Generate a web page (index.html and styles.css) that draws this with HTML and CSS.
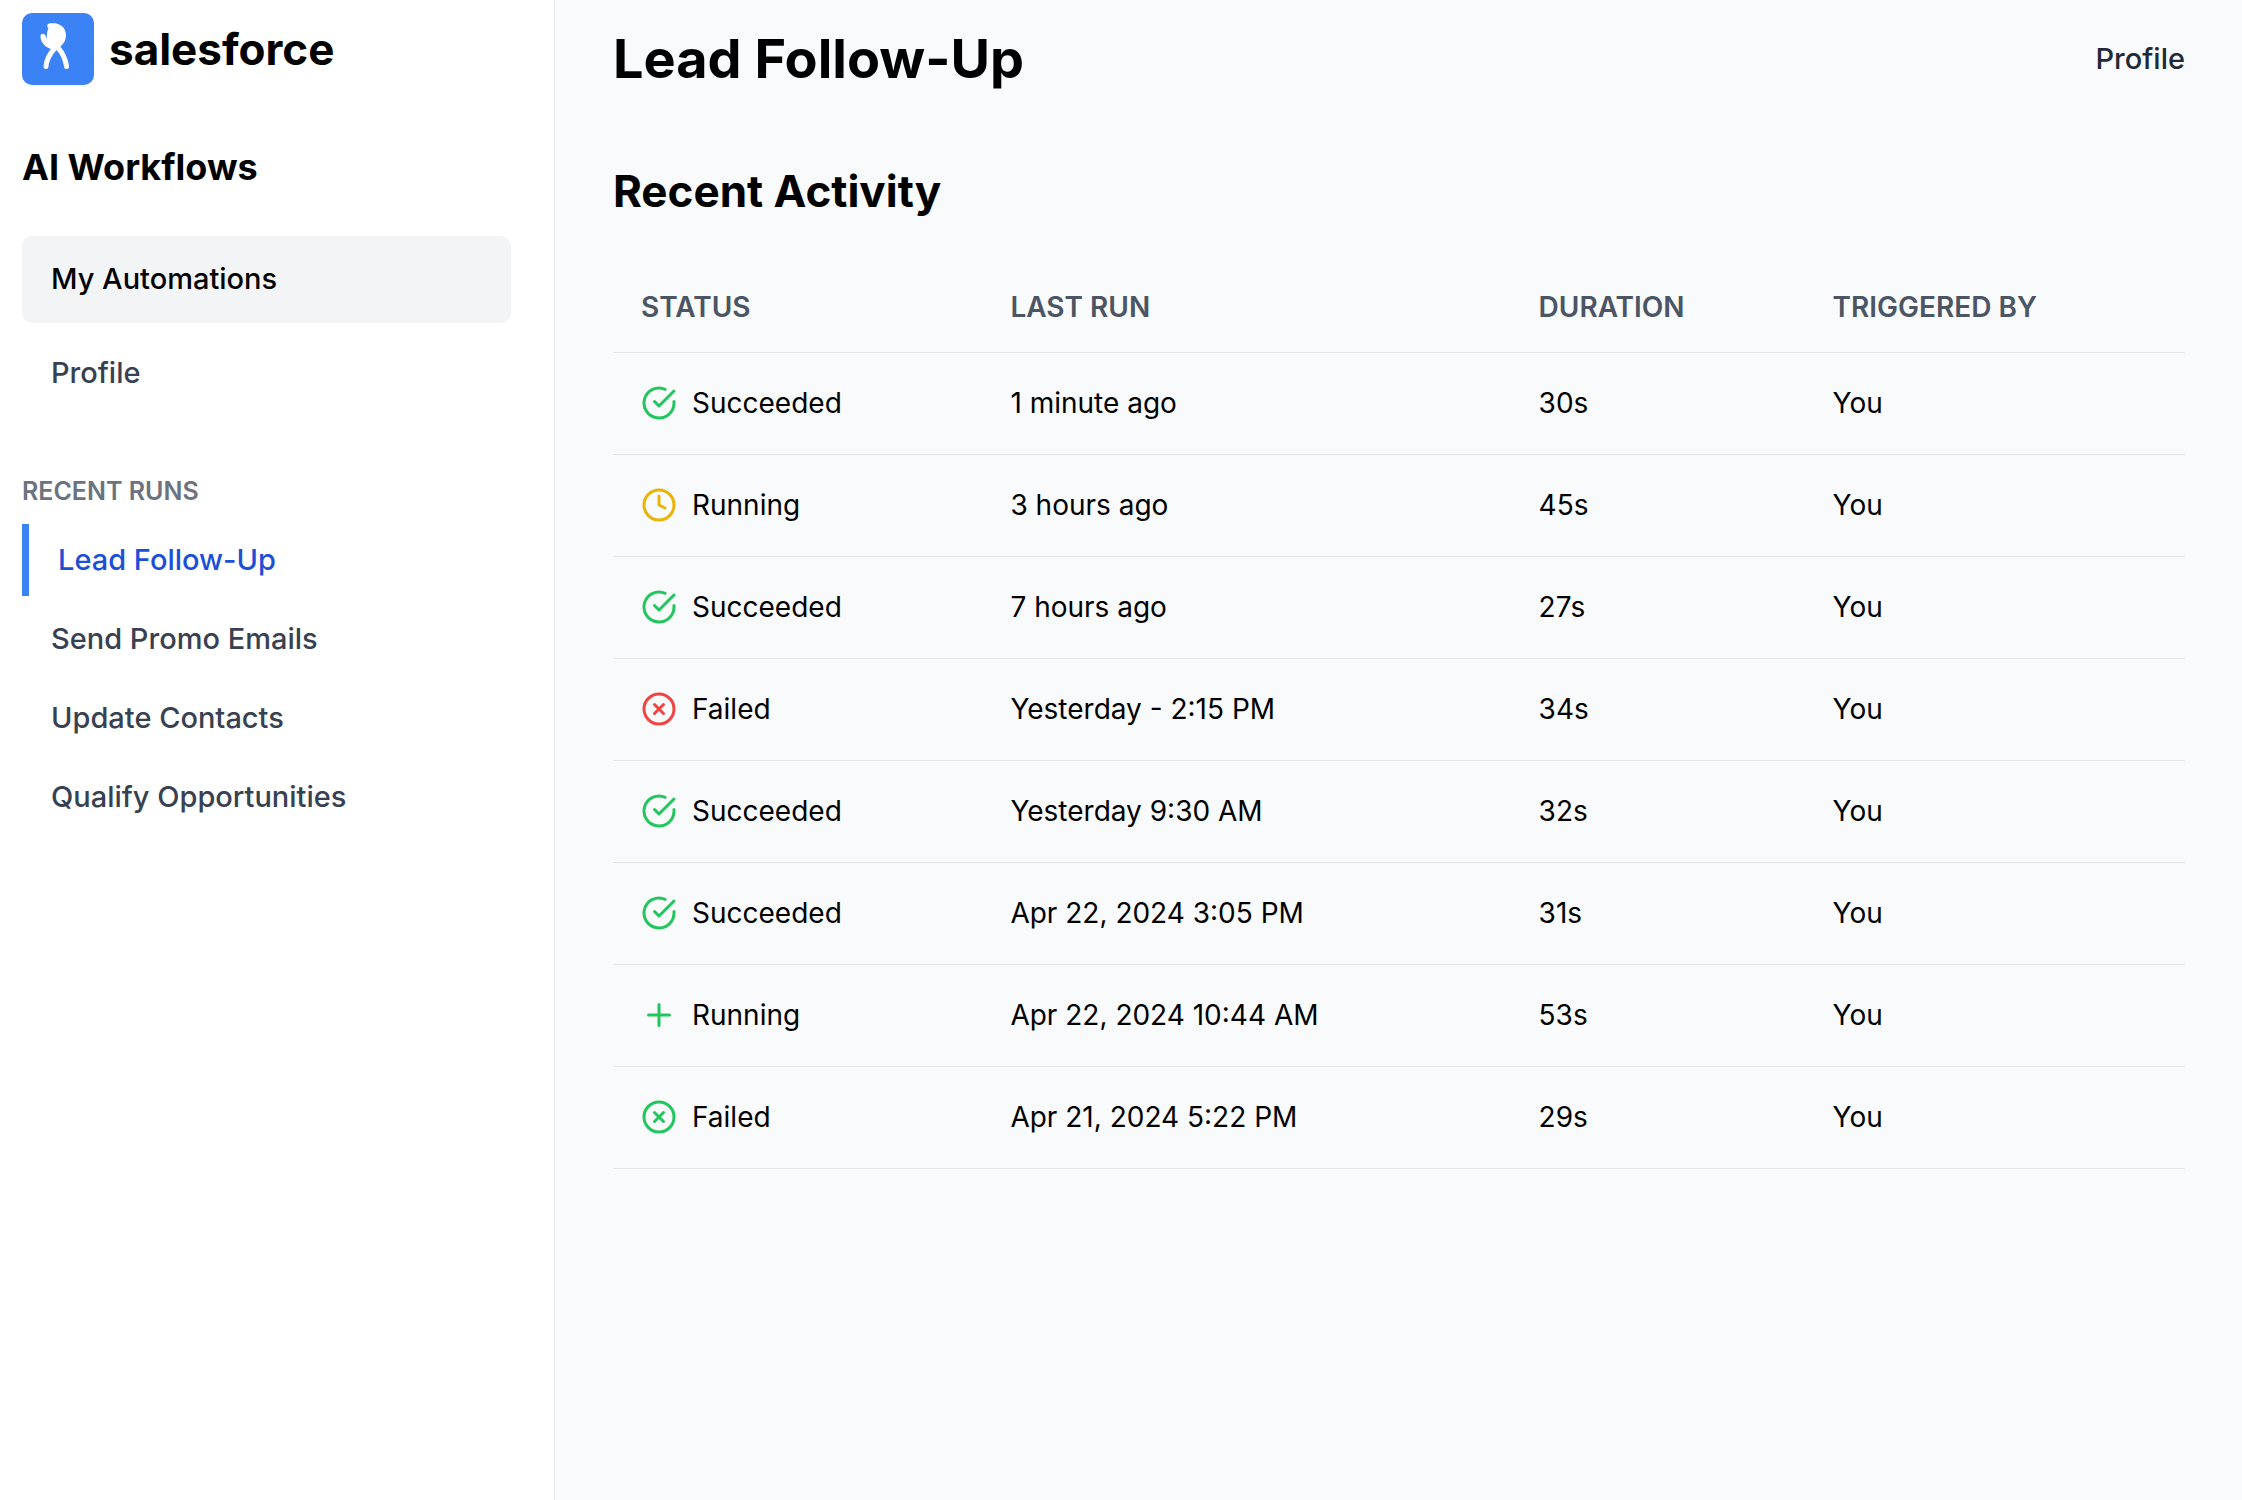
FILE: index.html
```html
<!DOCTYPE html>
<html lang="en">
  <head>
    <meta charset="utf-8">
    <meta name="viewport" content="width=device-width, initial-scale=1">
    <title>Lead Follow-Up - AI Workflows</title>
    <link rel="stylesheet" href="styles.css">
  </head>
  <body>
    <!-- icons used in the status column -->
    <svg class="sprite" aria-hidden="true">
      <symbol id="icon-check" viewBox="0 0 24 24">
        <path d="M22 11.08V12a10 10 0 1 1-5.93-9.14"/>
        <path d="M22 4 12 14.01l-3-3"/>
      </symbol>
      <symbol id="icon-clock" viewBox="0 0 24 24">
        <circle cx="12" cy="12" r="10"/>
        <path d="M12 6v6l4 2"/>
      </symbol>
      <symbol id="icon-x" viewBox="0 0 24 24">
        <circle cx="12" cy="12" r="10"/>
        <path d="m15 9-6 6M9 9l6 6"/>
      </symbol>
      <symbol id="icon-plus" viewBox="0 0 24 24">
        <path d="M5 12h14M12 5v14"/>
      </symbol>
    </svg>

    <div class="layout">
      <aside class="sidebar">
        <div class="brand">
          <svg class="logo" viewBox="0 0 72 72" aria-hidden="true">
            <path class="logo-head" d="M27 10.5C31 10 35 10 37 11.500C41.500 13 44 17.500 44 22.500C44 27 42 30 39.500 32.500L36 36H29C24 34.500 19 30 18.500 24C18 20 23 19.500 24 24L25 26C24.500 22 25 18 26.500 15C24.500 14 25 11 27 10.500z"/>
            <path class="logo-leg" d="M32.500 35.500C27.500 41 24.500 46 24 53.500M36.500 35.500C41.500 41 43.500 46 44.500 53.500"/>
          </svg>
          <span class="brand-name">salesforce</span>
        </div>
        <h2 class="sidebar-title">AI Workflows</h2>
        <nav class="nav">
          <a class="nav-item active" href="#">My Automations</a>
          <a class="nav-item" href="#">Profile</a>
        </nav>
        <h3 class="runs-title">RECENT RUNS</h3>
        <nav class="runs">
          <a class="run-item active" href="#">Lead Follow-Up</a>
          <a class="run-item" href="#">Send Promo Emails</a>
          <a class="run-item" href="#">Update Contacts</a>
          <a class="run-item" href="#">Qualify Opportunities</a>
        </nav>
      </aside>

      <main class="content">
        <header class="topbar">
          <h1>Lead Follow-Up</h1>
          <a class="profile-link" href="#">Profile</a>
        </header>
        <h2 class="section-title">Recent Activity</h2>
        <table class="activity">
          <thead>
            <tr>
              <th class="col-status">STATUS</th>
              <th class="col-last">LAST RUN</th>
              <th class="col-duration">DURATION</th>
              <th>TRIGGERED BY</th>
            </tr>
          </thead>
          <tbody>
            <tr>
              <td><div class="status"><svg class="icon green"><use href="#icon-check"/></svg>Succeeded</div></td>
              <td>1 minute ago</td>
              <td>30s</td>
              <td>You</td>
            </tr>
            <tr>
              <td><div class="status"><svg class="icon yellow"><use href="#icon-clock"/></svg>Running</div></td>
              <td>3 hours ago</td>
              <td>45s</td>
              <td>You</td>
            </tr>
            <tr>
              <td><div class="status"><svg class="icon green"><use href="#icon-check"/></svg>Succeeded</div></td>
              <td>7 hours ago</td>
              <td>27s</td>
              <td>You</td>
            </tr>
            <tr>
              <td><div class="status"><svg class="icon red"><use href="#icon-x"/></svg>Failed</div></td>
              <td>Yesterday - 2:15 PM</td>
              <td>34s</td>
              <td>You</td>
            </tr>
            <tr>
              <td><div class="status"><svg class="icon green"><use href="#icon-check"/></svg>Succeeded</div></td>
              <td>Yesterday 9:30 AM</td>
              <td>32s</td>
              <td>You</td>
            </tr>
            <tr>
              <td><div class="status"><svg class="icon green"><use href="#icon-check"/></svg>Succeeded</div></td>
              <td>Apr 22, 2024 3:05 PM</td>
              <td>31s</td>
              <td>You</td>
            </tr>
            <tr>
              <td><div class="status"><svg class="icon green"><use href="#icon-plus"/></svg>Running</div></td>
              <td>Apr 22, 2024 10:44 AM</td>
              <td>53s</td>
              <td>You</td>
            </tr>
            <tr>
              <td><div class="status"><svg class="icon green"><use href="#icon-x"/></svg>Failed</div></td>
              <td>Apr 21, 2024 5:22 PM</td>
              <td>29s</td>
              <td>You</td>
            </tr>
          </tbody>
        </table>
      </main>
    </div>
  </body>
</html>
```
FILE: styles.css
```css
* {
  box-sizing: border-box;
}
body {
  margin: 0;
  background: #f9fafb;
  color: #000;
  font-family: Inter, "Liberation Sans", sans-serif;
  font-size: 28px;
  line-height: 44px;
}
h1, h2, h3 {
  margin: 0;
}
a {
  color: inherit;
  text-decoration: none;
}
.sprite {
  display: none;
}
.layout {
  display: flex;
  min-height: 100vh;
}

/* sidebar */
.sidebar {
  flex: none;
  width: 555px;
  padding: 13px 43px 0 22px;
  background: #fff;
  border-right: 1px solid #e5e7eb;
}
.brand {
  display: flex;
  align-items: center;
  gap: 15px;
}
.logo {
  width: 72px;
  height: 72px;
  border-radius: 10px;
  background: #3b82f6;
}
.logo-head {
  fill: #fff;
}
.logo-leg {
  fill: none;
  stroke: #fff;
  stroke-width: 5;
  stroke-linecap: round;
}
.brand-name {
  font-size: 44px;
  font-weight: 700;
}
.sidebar-title {
  margin-top: 57px;
  font-size: 36px;
  line-height: 50px;
  font-weight: 700;
}
.nav {
  display: flex;
  flex-direction: column;
  gap: 7px;
  margin-top: 44px;
}
.nav-item {
  padding: 21px 29px 22px;
  border-radius: 10px;
  color: #374151;
  font-size: 29px;
  font-weight: 500;
}
.nav-item.active {
  background: #f3f4f6;
  color: #000;
}
.runs-title {
  margin-top: 56px;
  color: #6b7280;
  font-size: 25px;
  line-height: 36px;
  font-weight: 600;
}
.runs {
  display: flex;
  flex-direction: column;
  gap: 7px;
  margin-top: 15px;
}
.run-item {
  padding: 14px 29px;
  color: #374151;
  font-size: 29px;
  font-weight: 500;
}
.run-item.active {
  border-left: 7px solid #3b82f6;
  color: #1d4ed8;
}

/* main */
.content {
  flex: 1;
  padding: 27px 57px 0 58px;
}
.topbar {
  display: flex;
  align-items: center;
  justify-content: space-between;
}
h1 {
  font-size: 54px;
  line-height: 64px;
  font-weight: 700;
}
.profile-link {
  color: #1f2937;
  font-size: 29px;
  font-weight: 500;
}
.section-title {
  margin-top: 72px;
  font-size: 44px;
  line-height: 56px;
  font-weight: 700;
}
.activity {
  width: 100%;
  margin-top: 44px;
  border-collapse: collapse;
  table-layout: fixed;
}
.activity th,
.activity td {
  padding: 0 28px;
  border-bottom: 1px solid #e5e7eb;
  text-align: left;
}
.activity th {
  height: 89px;
  color: #4b5563;
  font-weight: 600;
}
.activity td {
  height: 102px;
}
.col-status {
  width: 23.5%;
}
.col-last {
  width: 33.6%;
}
.col-duration {
  width: 18.7%;
}
.status {
  display: flex;
  align-items: center;
  gap: 15px;
}
.icon {
  width: 36px;
  height: 36px;
  fill: none;
  stroke: currentColor;
  stroke-width: 2;
  stroke-linecap: round;
  stroke-linejoin: round;
}
.green {
  color: #22c55e;
}
.yellow {
  color: #eab308;
}
.red {
  color: #ef4444;
}
```
